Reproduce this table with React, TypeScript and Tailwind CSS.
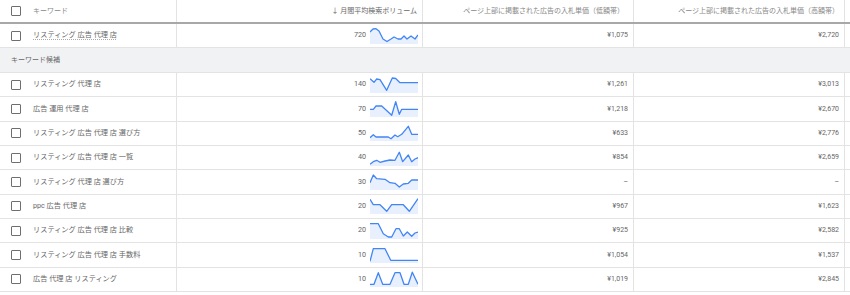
import React from "react";

type Row = {
  kw: string;
  vol: string;
  low: string;
  high: string;
  pts: [number, number][];
  dotted?: boolean;
};

const top: Row = {
  kw: "リスティング 広告 代理 店",
  vol: "720",
  low: "¥1,075",
  high: "¥2,720",
  dotted: true,
  pts: [
    [0, 4],
    [3, 1],
    [6, 0.7],
    [9, 3],
    [13, 11],
    [17, 13.5],
    [21, 11],
    [24, 9],
    [28, 11],
    [31, 11],
    [34, 8],
    [37, 11],
    [41, 8],
    [45, 11],
    [48, 7],
  ],
};

const rows: Row[] = [
  {
    kw: "リスティング 代理 店",
    vol: "140",
    low: "¥1,261",
    high: "¥3,013",
    pts: [
      [0, 1.7],
      [4, 5.3],
      [6.7, 2],
      [10, 2.7],
      [16.7, 13.3],
      [22.3, 1],
      [25.7, 1.5],
      [30, 5.7],
      [48, 5.7],
    ],
  },
  {
    kw: "広告 運用 代理 店",
    vol: "70",
    low: "¥1,218",
    high: "¥2,670",
    pts: [
      [0, 8.3],
      [3.3, 8.3],
      [6, 5],
      [11.7, 5],
      [21.7, 14.3],
      [25.7, 0.7],
      [29.3, 13.3],
      [31.7, 8.3],
      [48, 8.3],
    ],
  },
  {
    kw: "リスティング 広告 代理 店 選び方",
    vol: "50",
    low: "¥633",
    high: "¥2,776",
    pts: [
      [0, 12.7],
      [3.3, 9.7],
      [6, 12],
      [18.3, 12],
      [21, 13.7],
      [25, 10],
      [27.7, 11.7],
      [31.7, 9.3],
      [38.3, 1.3],
      [41.7, 9.3],
      [48, 9.3],
    ],
  },
  {
    kw: "リスティング 広告 代理 店 一覧",
    vol: "40",
    low: "¥854",
    high: "¥2,659",
    pts: [
      [0, 14.3],
      [3.3, 11.7],
      [6.7, 10.3],
      [10, 12.3],
      [15, 11],
      [20, 10],
      [25, 10.3],
      [29.3, 2.3],
      [32.7, 11.7],
      [38.3, 5],
      [41.7, 11.7],
      [45, 9],
      [48, 7.7],
    ],
  },
  {
    kw: "リスティング 代理 店 選び方",
    vol: "30",
    low: "–",
    high: "–",
    pts: [
      [0, 8.7],
      [3.3, 1],
      [6.7, 4.7],
      [15, 5.3],
      [20, 8.7],
      [25, 9.3],
      [29.3, 13],
      [33.3, 10],
      [38.3, 9.3],
      [41.7, 6],
      [48, 6],
    ],
  },
  {
    kw: "ppc 広告 代理 店",
    vol: "20",
    low: "¥967",
    high: "¥1,623",
    pts: [
      [0, 1.3],
      [3.3, 6.7],
      [10, 6.7],
      [16.7, 13.3],
      [21.7, 6.7],
      [33.3, 6.7],
      [39.3, 13.3],
      [48, 0.7],
    ],
  },
  {
    kw: "リスティング 広告 代理 店 比較",
    vol: "20",
    low: "¥925",
    high: "¥2,582",
    pts: [
      [0, 0.7],
      [8.3, 0.7],
      [13.3, 10.7],
      [18.3, 14],
      [21.7, 14],
      [26, 5.7],
      [29.3, 5.7],
      [33.3, 13],
      [37.3, 9],
      [41.7, 13.3],
      [45, 10],
      [48, 9],
    ],
  },
  {
    kw: "リスティング 広告 代理 店 手数料",
    vol: "10",
    low: "¥1,054",
    high: "¥1,537",
    pts: [
      [0, 14.3],
      [3.3, 1.7],
      [15, 1.7],
      [20.7, 13.3],
      [48, 13.3],
    ],
  },
  {
    kw: "広告 代理 店 リスティング",
    vol: "10",
    low: "¥1,019",
    high: "¥2,845",
    pts: [
      [0, 13.3],
      [4, 13.3],
      [8.3, 1.7],
      [12.7, 13.3],
      [20, 13.3],
      [25, 1.7],
      [30, 1.7],
      [34, 13.3],
      [38.3, 13.3],
      [42.3, 1.2],
      [48, 13.3],
    ],
  },
];

const font = {
  fontFamily: 'Roboto, "Noto Sans CJK JP", sans-serif',
};

function Spark({ pts }: { pts: [number, number][] }) {
  const line = pts.map((p) => `${p[0]},${p[1]}`).join(" ");
  const area = `0,16 ${line} 48,16`;
  return (
    <svg width="48" height="16" viewBox="0 0 48 16" className="shrink-0">
      <polygon points={area} fill="#e8f0fe" />
      <polyline
        points={line}
        fill="none"
        stroke="#4285f4"
        strokeWidth="1.3"
        strokeLinejoin="round"
      />
    </svg>
  );
}

function Box() {
  return (
    <div className="w-[10px] h-[10px] border-[1.5px] border-[#6f6f6f] rounded-[1px] shrink-0" />
  );
}

function DataRow({ r, h }: { r: Row; h: string }) {
  return (
    <div className={`flex border-b border-[#e3e3e3] ${h}`}>
      <div className="w-[177px] shrink-0 border-r border-[#e3e3e3] flex items-center pl-[11px]">
        <Box />
        <span
          className={`ml-[12px] text-[7.2px] text-[#666] whitespace-nowrap ${
            r.dotted
              ? "underline decoration-dotted decoration-[#aaa] underline-offset-[2px]"
              : ""
          }`}
        >
          {r.kw}
        </span>
      </div>
      <div className="w-[246px] shrink-0 border-r border-[#e3e3e3] flex items-center justify-end pr-[4px] gap-[4px]">
        <span className="text-[7.2px] text-[#666]">{r.vol}</span>
        <Spark pts={r.pts} />
      </div>
      <div className="w-[211px] shrink-0 border-r border-[#e3e3e3] flex items-center justify-end pr-[5px]">
        <span className="text-[7px] text-[#666]">{r.low}</span>
      </div>
      <div className="w-[211px] shrink-0 border-r border-[#e3e3e3] flex items-center justify-end pr-[5px]">
        <span className="text-[7px] text-[#666]">{r.high}</span>
      </div>
      <div className="flex-1" />
    </div>
  );
}

export default function App() {
  return (
    <div className="w-[850px] h-[295px] bg-white overflow-hidden" style={font}>
      <div className="flex h-[24px] border-b-2 border-[#a8a8a8]">
        <div className="w-[177px] shrink-0 border-r border-[#e3e3e3] flex items-center pl-[11px]">
          <Box />
          <span className="ml-[12px] text-[7px] text-[#888] whitespace-nowrap">
            キーワード
          </span>
        </div>
        <div className="w-[246px] shrink-0 border-r border-[#e3e3e3] flex items-center justify-end pr-[5px]">
          <span className="text-[7px] text-[#666] whitespace-nowrap">
            ↓ 月間平均検索ボリューム
          </span>
        </div>
        <div className="w-[211px] shrink-0 border-r border-[#e3e3e3] flex items-center justify-end pr-[9px]">
          <span className="text-[7px] text-[#888] whitespace-nowrap">
            ページ上部に掲載された広告の入札単価（低額帯）
          </span>
        </div>
        <div className="w-[211px] shrink-0 border-r border-[#e3e3e3] flex items-center justify-end pr-[5px]">
          <span className="text-[7px] text-[#888] whitespace-nowrap">
            ページ上部に掲載された広告の入札単価（高額帯）
          </span>
        </div>
        <div className="flex-1" />
      </div>
      <DataRow r={top} h="h-[24px]" />
      <div className="h-[25px] bg-[#f1f2f4] border-b border-[#e3e3e3] flex items-center pl-[11px]">
        <span className="text-[7px] text-[#666]">キーワード候補</span>
      </div>
      {rows.map((r, i) => (
        <DataRow key={i} r={r} h="h-[24.35px]" />
      ))}
    </div>
  );
}
